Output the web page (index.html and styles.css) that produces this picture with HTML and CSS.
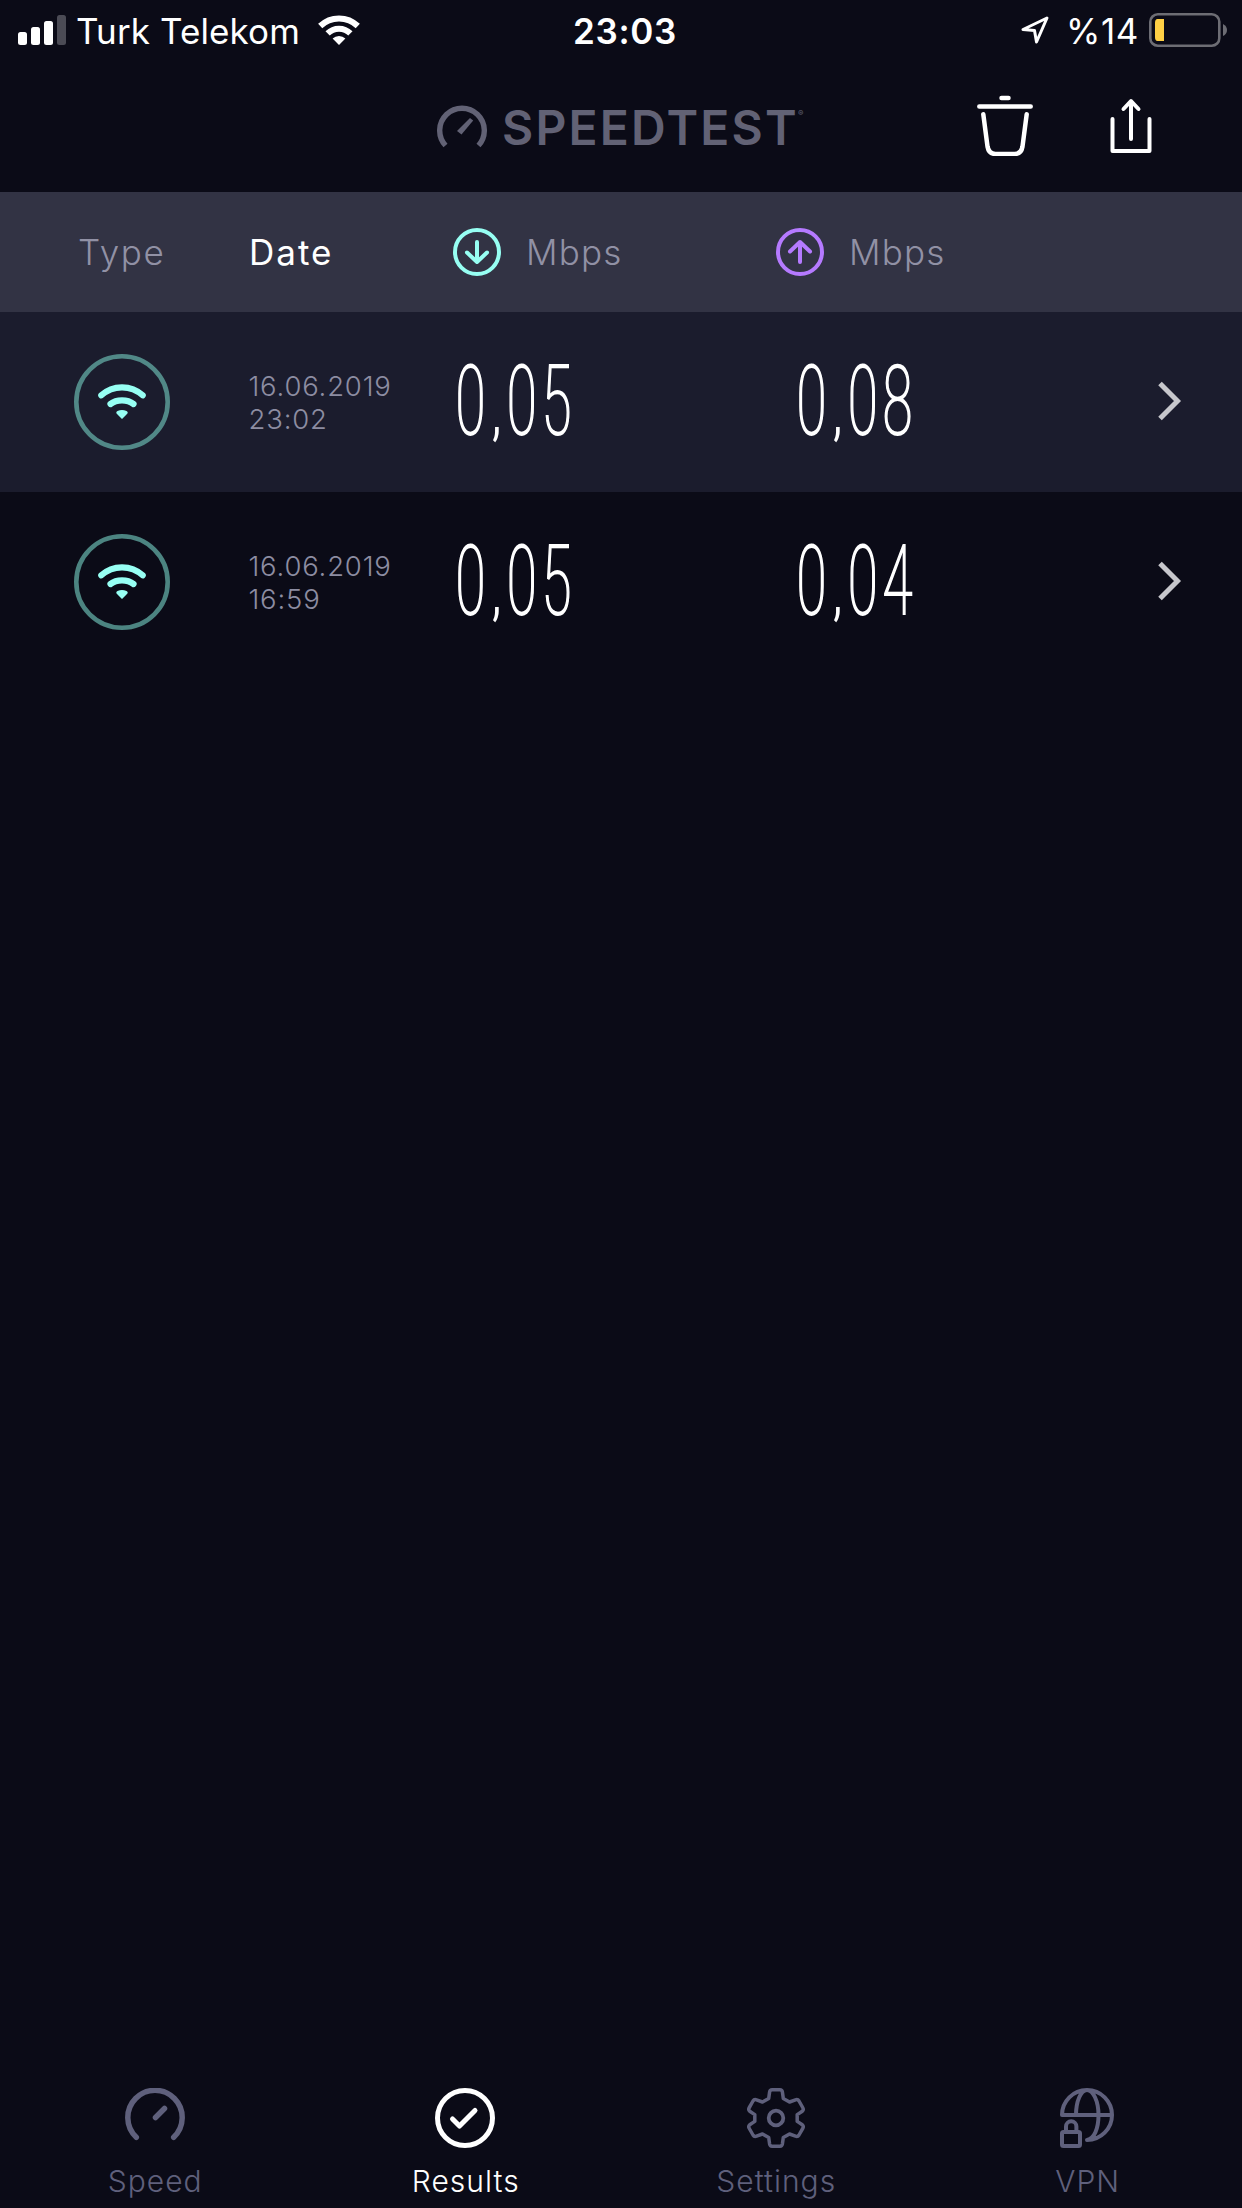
FILE: index.html
```html
<!DOCTYPE html>
<html lang="en">
<head>
<meta charset="utf-8">
<title>Speedtest – Results</title>
<link rel="stylesheet" href="styles.css">
</head>
<body>
<div class="app">
  <div class="status">
    <svg class="signal" width="48" height="30" viewBox="0 0 48 30" fill="#fff"><rect y="17" width="9" height="13" rx="2.5"/><rect x="13" y="12" width="9" height="18" rx="2.5"/><rect x="26" y="6" width="9" height="24" rx="2.5"/><rect x="39" width="9" height="30" rx="2.5" fill="#4b4b55"/></svg>
    <span class="carrier">Turk Telekom</span>
    <svg class="wifi" width="42" height="30" viewBox="0 0 42 30" fill="none" stroke="#fff" stroke-width="6"><path d="M2.2 11A27 27 0 0 1 39.8 11"/><path d="M9.6 18.4A16.200 16.200 0 0 1 32.400 18.400"/><path d="M14.600 23.600A9 9 0 0 1 27.400 23.600L21 30Z" fill="#fff" stroke="none"/></svg>
    <span class="clock">23:03</span>
    <svg class="location" width="30" height="30" viewBox="0 0 30 30" fill="none" stroke="#fff" stroke-width="3" stroke-linejoin="round"><path d="M27 3L3 14.500L14.500 15.500L16.500 27Z"/></svg>
    <span class="percent">%14</span>
    <svg class="battery" width="79" height="34" viewBox="0 0 79 34"><rect x="1.300" y="1.300" width="69" height="31.400" rx="7.500" fill="none" stroke="#6d6d74" stroke-width="2.600"/><path d="M8.500 6H15V28H8.500Q6 28 6 24V10Q6 6 8.500 6Z" fill="#ffd045"/><path d="M74 11Q78 13 78 17T74 23Z" fill="#6d6d74"/></svg>
  </div>
  <header class="nav">
    <svg class="gauge" width="50" height="43" viewBox="0 0 50 43" fill="none" stroke="#626275"><path d="M8.500 40.500A22.300 22.300 0 1 1 41.500 40.500" stroke-width="5.400"/><path d="M20 26L33 13L36.200 15.500L24.500 29.500Z" fill="#626275" stroke="none"/></svg>
    <span class="brand">SPEEDTEST</span><span class="reg">®</span>
    <svg class="trash" width="56" height="62" viewBox="0 0 56 62" fill="none" stroke="#fff" stroke-width="4.500" stroke-linecap="round"><path d="M24.500 4H31.500M2.300 12.500H53.700M6.300 20.300L10.500 52.500Q11.800 60 18.500 60H37.500Q44.200 60 45.500 52.500L49.700 20.300"/></svg>
    <svg class="share" width="42" height="56" viewBox="0 0 42 56" fill="none" stroke="#fff" stroke-width="4" stroke-linecap="round" stroke-linejoin="round"><path d="M2.500 21V53H39.500V21M21 41V3.500M13.500 11L21 3L28.500 11"/></svg>
  </header>
  <div class="columns">
    <span class="type">Type</span>
    <span class="date">Date</span>
    <svg class="down" width="48" height="48" viewBox="0 0 48 48" fill="none" stroke="#97fff3" stroke-width="4" stroke-linecap="round" stroke-linejoin="round"><circle cx="24" cy="24" r="22"/><path d="M24 14V34M14 24.500L24 34L34 24.500"/></svg>
    <span class="unit">Mbps</span>
    <svg class="up" width="48" height="48" viewBox="0 0 48 48" fill="none" stroke="#b57aff" stroke-width="4" stroke-linecap="round" stroke-linejoin="round"><circle cx="24" cy="24" r="22"/><path d="M24 34V14M14 23.500L24 14L34 23.500"/></svg>
    <span class="unit">Mbps</span>
  </div>
  <div class="row lit">
    <svg class="kind" width="96" height="96" viewBox="0 0 96 96" fill="none" stroke="#97fff3" stroke-linecap="round"><circle cx="48" cy="48" r="45.700" stroke="#518887" stroke-width="4.600"/><path d="M27.300 41.300Q36 33.300 48 33.300T68.700 41.300M36.500 50Q41 46.300 48 46.300T59.500 50" stroke-width="6.200"/><path d="M43.500 60.500Q41 58.500 43.500 57Q48 55 52.500 57Q55 58.500 52.500 60.500L48 65Z" fill="#97fff3" stroke="none"/></svg>
    <div class="when">16.06.2019<br>23:02</div>
    <div class="speed"><span>0<i>,</i>05</span></div>
    <div class="speed"><span>0<i>,</i>08</span></div>
    <svg class="chevron" width="26" height="40" viewBox="0 0 26 40" fill="none" stroke="#c7c7cc" stroke-width="5"><path d="M3 2.500L20.500 20L3 37.500"/></svg>
  </div>
  <div class="row">
    <svg class="kind" width="96" height="96" viewBox="0 0 96 96" fill="none" stroke="#97fff3" stroke-linecap="round"><circle cx="48" cy="48" r="45.700" stroke="#4c8481" stroke-width="4.600"/><path d="M27.300 41.300Q36 33.300 48 33.300T68.700 41.300M36.500 50Q41 46.300 48 46.300T59.500 50" stroke-width="6.200"/><path d="M43.500 60.500Q41 58.500 43.500 57Q48 55 52.500 57Q55 58.500 52.500 60.500L48 65Z" fill="#97fff3" stroke="none"/></svg>
    <div class="when">16.06.2019<br>16:59</div>
    <div class="speed"><span>0<i>,</i>05</span></div>
    <div class="speed"><span>0<i>,</i>04</span></div>
    <svg class="chevron" width="26" height="40" viewBox="0 0 26 40" fill="none" stroke="#c7c7cc" stroke-width="5"><path d="M3 2.500L20.500 20L3 37.500"/></svg>
  </div>
  <nav class="tabs">
    <div class="tab"><svg width="60" height="60" viewBox="0 0 60 60" fill="none" stroke="currentColor" stroke-width="5.500" stroke-linecap="round"><path d="M11.300 49.300A27.200 27.200 0 1 1 48.700 49.300M30.500 29.500L39.500 20.500"/></svg><span>Speed</span></div>
    <div class="tab active"><svg width="60" height="60" viewBox="0 0 60 60" fill="none" stroke="currentColor" stroke-width="5" stroke-linecap="round" stroke-linejoin="round"><circle cx="30" cy="30" r="27.500"/><path d="M17.500 31L24.500 38L40 22.500"/></svg><span>Results</span></div>
    <div class="tab"><svg width="60" height="60" viewBox="0 0 60 60" fill="none" stroke="currentColor" stroke-width="3.500" stroke-linejoin="round"><circle cx="30" cy="30" r="7.300" stroke-width="3.800"/><path d="M26 1.800H34Q36 1.800 36.400 4L37.300 10.500L43.500 14L49.500 11.800Q51.800 11 53 13L56.700 19.500Q58 21.700 56.300 23.200L51.200 26.600V33.400L56.300 36.800Q58 38.300 56.700 40.500L53 47Q51.800 49 49.500 48.200L43.500 46L37.300 49.500L36.400 56Q36 58.200 34 58.200H26Q24 58.200 23.600 56L22.700 49.500L16.500 46L10.500 48.200Q8.200 49 7 47L3.300 40.500Q2 38.300 3.700 36.800L8.800 33.400V26.600L3.700 23.200Q2 21.700 3.300 19.500L7 13Q8.200 11 10.500 11.800L16.500 14L22.700 10.500L23.600 4Q24 1.800 26 1.800Z"/></svg><span>Settings</span></div>
    <div class="tab vpn"><svg width="60" height="60" viewBox="0 0 60 60" fill="none" stroke="currentColor" stroke-width="4" stroke-linecap="round" stroke-linejoin="round"><path d="M5 27A25 25 0 1 1 30 52M5 27H55M19 27C19 13 24 2 30 2S41.500 13 41.500 27S37 51 30 52"/><rect x="5" y="44" width="18" height="14" rx="1.500"/><path d="M9 43V38.500A5.200 5.200 0 0 1 19.400 38.500V43"/></svg><span>VPN</span></div>
  </nav>
</div>
</body>
</html>
```
FILE: styles.css
```css
* { box-sizing: border-box; }
body { margin: 0; background: #0b0b17; font-family: Inter, "Liberation Sans", sans-serif; }
svg { display: block; flex: none; }
span { white-space: nowrap; }
.app { width: 1242px; height: 2208px; display: flex; flex-direction: column; color: #fff; overflow: hidden; }

.status { height: 60px; display: flex; align-items: center; padding-left: 18px; font-size: 35px; line-height: 60px; }
.carrier { width: 240px; margin-left: 10px; letter-spacing: 0.1px; padding-top: 2px; }
.wifi { margin-left: 2px; }
.clock { flex: none; width: 315px; padding: 2px 0 0 213px; font-weight: 600; letter-spacing: 0.7px; }
.location { margin-left: 345px; }
.percent { width: 84px; margin-left: 16px; padding-top: 2px; letter-spacing: 0.6px; }
.battery { margin-left: -1px; }

.nav { height: 132px; display: flex; align-items: flex-start; padding-left: 437px; color: #626275; }
.gauge { margin-top: 45px; }
.brand { width: 296px; margin: 38px 0 0 15px; font-size: 48px; line-height: 60px; font-weight: 600; letter-spacing: 2.2px; }
.reg { width: 10px; margin-top: 48px; font-size: 8px; line-height: 10px; }
.trash { margin: 34px 0 0 169px; }
.share { margin: 38px 0 0 77px; }

.columns { height: 120px; background: #323344; display: flex; align-items: center; padding-left: 78px; font-size: 35px; font-weight: 340; color: #9191a5; }
.type { width: 171px; letter-spacing: 1.6px; }
.date { width: 204px; color: #fff; letter-spacing: 2px; font-weight: 370; }
.unit { width: 250px; margin-left: 25px; letter-spacing: 1.2px; }

.row { height: 180px; display: flex; align-items: center; padding-left: 73.5px; }
.lit { background: #1b1c2d; }
.when { width: 206.5px; margin: 2px 0 0 79px; font-size: 27.5px; line-height: 33px; font-weight: 340; color: #8d8da2; letter-spacing: 0.8px; }
.speed { width: 341px; height: 100px; margin-top: -2px; font-family: "Roboto Condensed", Roboto, sans-serif; font-stretch: 75%; font-weight: 100; font-size: 97px; line-height: 100px; letter-spacing: 5.8px; -webkit-text-stroke: 1.9px #fff; }
.speed span { display: inline-block; transform: scaleX(.66); transform-origin: 0 50%; }
.speed i { font-style: normal; font-size: 62px; font-weight: 400; margin: 0 3px 0 4px; -webkit-text-stroke: 0; }
.chevron { margin: -2px 0 0 20px; }

.tabs { margin-top: auto; height: 128px; display: grid; grid-template-columns: repeat(4, 1fr); color: #5f607c; }
.tab { display: flex; flex-direction: column; align-items: center; padding-top: 8px; font-size: 30px; line-height: 40px; font-weight: 330; letter-spacing: 1px; }
.tab svg { margin-left: -1px; }
.tab span { margin-top: 13px; }
.vpn { padding-left: 2px; }
.active { color: #fff; }
```
